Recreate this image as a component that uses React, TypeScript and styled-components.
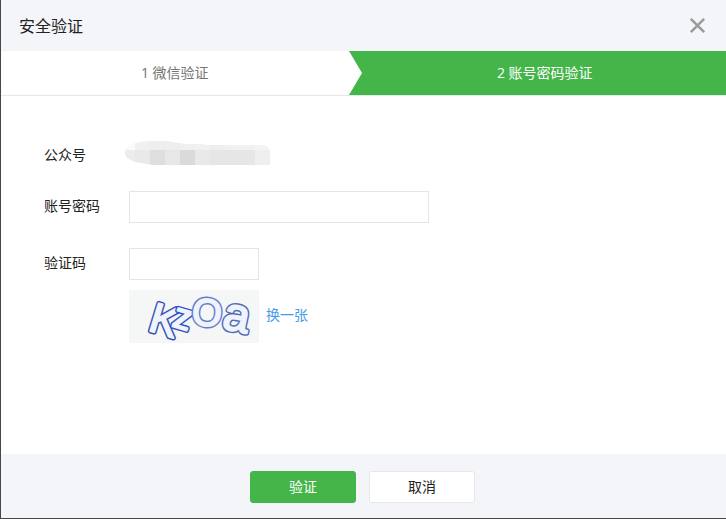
import React, { useState } from "react";
import styled, { createGlobalStyle, css } from "styled-components";

const GlobalStyle = createGlobalStyle`
  *, *::before, *::after { box-sizing: border-box; }
  body { margin: 0; background: #fff; }
  body, button, input {
    font-family: "Open Sans", "Noto Sans CJK SC", sans-serif;
    font-size: 14px;
    line-height: 22px;
    color: #222;
  }
`;

const Dialog = styled.form`
  display: flex;
  flex-direction: column;
  min-height: 100vh;
  background: #fff;
  border-left: 1px solid #464648;
  border-bottom: 1px solid #464648;
`;

const Header = styled.header`
  display: flex;
  align-items: center;
  justify-content: space-between;
  height: 51px;
  padding: 0 20px 0 18px;
  background: #f4f5f9;
`;

const Title = styled.h1`
  margin: 0;
  font-size: 16px;
  font-weight: 400;
  line-height: 24px;
`;

const CloseButton = styled.button`
  display: flex;
  padding: 0;
  border: 0;
  background: none;
  color: #9b9b9c;
  cursor: pointer;
`;

const Steps = styled.ol`
  display: flex;
  height: 45px;
  margin: 0;
  padding: 0;
  list-style: none;
  border-bottom: 1px solid #e7e7eb;
`;

const Step = styled.li<{ $active?: boolean }>`
  display: flex;
  flex: 1;
  background: ${(p) => (p.$active ? "#44b549" : "#fff")};
  color: ${(p) => (p.$active ? "#fff" : "#757575")};
`;

const StepText = styled.span`
  flex: 1;
  align-self: center;
  text-align: center;
`;

const Body = styled.div`
  flex: 1;
  display: flex;
  flex-direction: column;
  padding: 43px 44px 24px 43px;
`;

const Row = styled.div<{ $gap?: number }>`
  display: grid;
  grid-template-columns: 85px 1fr;
  align-items: center;
  min-height: 32px;
  margin-bottom: ${(p) => p.$gap ?? 0}px;
`;

const Label = styled.label`
  padding-bottom: 2px;
`;

const Masked = styled.svg`
  display: block;
  margin-left: -4px;
`;

const TextBox = styled.input<{ $short?: boolean }>`
  width: 100%;
  max-width: ${(p) => (p.$short ? 130 : 300)}px;
  height: 32px;
  padding: 4px 10px;
  border: 1px solid #e4e5ea;
  border-radius: 0;
  background: #fff;
  outline: none;
`;

const CaptchaRow = styled.div`
  display: flex;
  align-items: center;
  gap: 7px;
  margin-left: 85px;
`;

const CaptchaPicture = styled.svg`
  display: block;
  overflow: visible;
  background: #f5f6f6;
`;

const RefreshLink = styled.a`
  padding-bottom: 4px;
  color: #459ae9;
  text-decoration: none;
`;

const Footer = styled.footer`
  display: flex;
  justify-content: center;
  gap: 13px;
  padding: 17px 2px 15px 0;
  background: #f4f5f9;
`;

const Button = styled.button<{ $primary?: boolean }>`
  width: 106px;
  height: 32px;
  padding: 0;
  border: 1px solid #e7e7eb;
  border-radius: 3px;
  background: #fff;
  cursor: pointer;
  ${(p) =>
    p.$primary &&
    css`
      border-color: #44b549;
      background: #44b549;
      color: #fff;
    `}
`;

const topCells = ["#fafafa", "#f0f0f0", "#eeeeee", "#eeeeee", "#f0f0f0", "#f1f1f1", "#eeeeee", "#f1f1f1", "#f1f1f1", "#f3f3f3"];
const bottomCells = ["#ececec", "#e9e9e9", "#dedede", "#e7e7e7", "#dadada", "#e9e9e9", "#e6e6e6", "#e6e6e6", "#e6e6e6", "#efefef"];

function MaskedName() {
  return (
    <Masked width="145" height="28" viewBox="0 0 145 28" role="img" aria-label="公众号">
      <clipPath id="smear">
        <path d="M0 9 Q2 4 10 2 Q18 0 25 0 L42 0 L54 2 L60 3 L76 3 L82 4 L137 4 Q142 4 145 9 V24 H28 L10 21 Q0 18 0 12Z" />
      </clipPath>
      <g clipPath="url(#smear)" shapeRendering="crispEdges">
        {topCells.map((fill, i) => (
          <rect key={"t" + i} x={i * 15 - 5} y="0" width="15" height="9" fill={fill} />
        ))}
        {bottomCells.map((fill, i) => (
          <rect key={"b" + i} x={i * 15 - 5} y="9" width="15" height="15" fill={fill} />
        ))}
      </g>
    </Masked>
  );
}

const glyphs = [
  { char: "K", x: 18, y: 40, size: 42, turn: 17, color: "#354fb6" },
  { char: "z", x: 42, y: 36, size: 36, turn: 16, color: "#3153c8" },
  { char: "O", x: 62, y: 34, size: 38, turn: 6, color: "#667bcb" },
  { char: "a", x: 92, y: 38, size: 47, turn: 12, color: "#5269b8" },
];

function Captcha() {
  return (
    <CaptchaPicture width="130" height="53" viewBox="0 0 130 53" role="img" aria-label="验证码">
      {glyphs.map((g) => (
        <g
          key={g.char}
          transform={`rotate(${g.turn} ${g.x} ${g.y})`}
          fontFamily="Liberation Sans, sans-serif"
          fontSize={g.size}
          strokeLinejoin="round"
        >
          <text x={g.x} y={g.y} fill={g.color} stroke={g.color} strokeWidth="5">{g.char}</text>
          <text x={g.x} y={g.y} fill="#eef3fc" stroke="#eef3fc" strokeWidth="2">{g.char}</text>
        </g>
      ))}
    </CaptchaPicture>
  );
}

export default function App() {
  const [password, setPassword] = useState("");
  const [code, setCode] = useState("");
  return (
    <>
      <GlobalStyle />
      <Dialog onSubmit={(e) => e.preventDefault()}>
        <Header>
          <Title>安全验证</Title>
          <CloseButton type="button" aria-label="关闭">
            <svg width="17" height="17" viewBox="0 0 17 17" fill="none" stroke="currentColor" strokeWidth="2.5">
              <path d="M1.8 1.8 15.2 15.2M15.2 1.8 1.8 15.2" />
            </svg>
          </CloseButton>
        </Header>
        <Steps>
          <Step>
            <StepText>1 微信验证</StepText>
            <svg width="15" height="44" viewBox="0 0 15 44" aria-hidden="true">
              <path d="M0 0H15V44H0L13 22Z" fill="#44b549" />
            </svg>
          </Step>
          <Step $active aria-current="step">
            <StepText>2 账号密码验证</StepText>
          </Step>
        </Steps>
        <Body>
          <Row $gap={20}>
            <span>公众号</span>
            <MaskedName />
          </Row>
          <Row $gap={25}>
            <Label htmlFor="password">账号密码</Label>
            <TextBox id="password" type="password" value={password} onChange={(e) => setPassword(e.target.value)} />
          </Row>
          <Row $gap={10}>
            <Label htmlFor="code">验证码</Label>
            <TextBox $short id="code" type="text" value={code} onChange={(e) => setCode(e.target.value)} />
          </Row>
          <CaptchaRow>
            <Captcha />
            <RefreshLink href="#">换一张</RefreshLink>
          </CaptchaRow>
        </Body>
        <Footer>
          <Button $primary type="submit">验证</Button>
          <Button type="button">取消</Button>
        </Footer>
      </Dialog>
    </>
  );
}
